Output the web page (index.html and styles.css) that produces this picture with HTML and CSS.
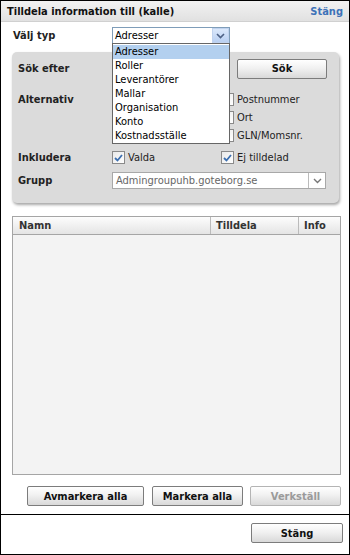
FILE: index.html
```html
<!DOCTYPE html>
<html>
<head>
<meta charset="utf-8">
<link rel="stylesheet" href="styles.css">
</head>
<body>
<div class="dialog">
  <div class="titlebar">
    <span class="title">Tilldela information till (kalle)</span>
    <a class="close-link">Stäng</a>
  </div>
  <div class="content">
    <div class="type-row">
      <span class="label">Välj typ</span>
      <div class="type-select">
        <div class="select blue">
          <span class="select-text">Adresser</span>
          <span class="arrow-btn">
            <svg width="9" height="6" viewBox="0 0 9 6"><path d="M1 1 L4.5 4.5 L8 1" fill="none" stroke="#4d6185" stroke-width="1.6"/></svg>
          </span>
        </div>
        <ul class="dropdown">
          <li class="sel">Adresser</li>
          <li>Roller</li>
          <li>Leverantörer</li>
          <li>Mallar</li>
          <li>Organisation</li>
          <li>Konto</li>
          <li>Kostnadsställe</li>
        </ul>
      </div>
    </div>

    <div class="panel">
      <div class="prow search-row">
        <span class="label">Sök efter</span>
        <div class="controls">
          <span class="text-input"></span>
          <button class="btn search-btn">Sök</button>
        </div>
      </div>
      <div class="prow alt-row">
        <span class="label">Alternativ</span>
        <div class="alt-grid">
          <span class="cb"><span class="box"></span></span>
          <label class="cb"><span class="box"></span>Postnummer</label>
          <span class="cb"><span class="box"></span></span>
          <label class="cb"><span class="box"></span>Ort</label>
          <span class="cb"><span class="box"></span></span>
          <label class="cb"><span class="box"></span>GLN/Momsnr.</label>
        </div>
      </div>
      <div class="prow inc-row">
        <span class="label">Inkludera</span>
        <div class="alt-grid">
          <label class="cb"><span class="box checked"><svg width="9" height="8" viewBox="0 0 9 8"><path d="M1 4 L3.5 6.5 L8 1" fill="none" stroke="#3c6fb0" stroke-width="1.8"/></svg></span>Valda</label>
          <label class="cb"><span class="box checked"><svg width="9" height="8" viewBox="0 0 9 8"><path d="M1 4 L3.5 6.5 L8 1" fill="none" stroke="#3c6fb0" stroke-width="1.8"/></svg></span>Ej tilldelad</label>
        </div>
      </div>
      <div class="prow group-row">
        <span class="label">Grupp</span>
        <div class="select gray">
          <span class="select-text">Admingroupuhb.goteborg.se</span>
          <span class="arrow-plain">
            <svg width="9" height="6" viewBox="0 0 9 6"><path d="M1 1 L4.5 4.5 L8 1" fill="none" stroke="#777" stroke-width="1.4"/></svg>
          </span>
        </div>
      </div>
    </div>

    <div class="table">
      <div class="thead">
        <span class="th c-name">Namn</span>
        <span class="th c-assign">Tilldela</span>
        <span class="th c-info">Info</span>
      </div>
      <div class="tbody"></div>
    </div>

    <div class="actions">
      <button class="btn w-unmark">Avmarkera alla</button>
      <button class="btn w-mark">Markera alla</button>
      <button class="btn w-apply disabled">Verkställ</button>
    </div>
  </div>
  <div class="footer">
    <button class="btn w-close">Stäng</button>
  </div>
</div>
</body>
</html>
```

FILE: styles.css
```css
* { box-sizing: border-box; }
html, body { margin: 0; padding: 0; background: #fff; }
body {
  font-family: "DejaVu Sans Condensed", "DejaVu Sans", sans-serif;
  font-size: 11px;
  color: #000;
}
.dialog {
  width: 350px;
  height: 555px;
  border: 1px solid #000;
  display: flex;
  flex-direction: column;
  background: #fff;
}
.titlebar {
  height: 21px;
  flex: none;
  display: flex;
  align-items: center;
  justify-content: space-between;
  padding: 0 6px 0 6px;
  background: linear-gradient(#f2f2f2, #e1e1e1);
  border-bottom: 1px solid #d0d0d0;
}
.title { font-weight: bold; font-size: 11px; color: #111; }
.close-link { font-weight: bold; color: #3d72b8; }

.content {
  flex: 1;
  padding: 5px 8px 0 10px;
  display: flex;
  flex-direction: column;
}
.label { font-weight: bold; color: #222; }

.type-row {
  display: flex;
  align-items: center;
  height: 17px;
  padding-left: 2px;
  position: relative;
  z-index: 5;
}
.type-row .label { width: 99px; }
.type-select { position: relative; width: 118px; }

.select {
  height: 17px;
  display: flex;
  align-items: center;
  background: #fff;
}
.select.blue { border: 1px solid #7f9db9; padding-left: 2px; }
.select-text { flex: 1; }
.arrow-btn {
  width: 17px;
  height: 15px;
  display: flex;
  align-items: center;
  justify-content: center;
  background: linear-gradient(#dbe8fb, #b9d0f2);
  border: 1px solid #c0d3ef;
}
.dropdown {
  position: absolute;
  left: 0;
  top: 16px;
  width: 118px;
  margin: 0;
  padding: 1px 0 0 0;
  list-style: none;
  background: #fff;
  border: 1px solid #666;
}
.dropdown li { height: 14px; line-height: 14px; padding-left: 2px; }
.dropdown li.sel { background: #b3d0ef; }

.panel {
  margin-top: 8px;
  width: 327px;
  margin-left: 1px;
  height: 151px;
  background: #dbdbdb;
  border-radius: 5px;
  box-shadow: 1px 2px 3px rgba(0,0,0,0.35);
  padding: 7px 6px 0 6px;
  display: flex;
  flex-direction: column;
}
.prow { display: flex; }
.prow .label { width: 94px; flex: none; }
.search-row { align-items: center; height: 19px; }
.controls { display: flex; align-items: center; gap: 8px; }
.text-input { display: block; width: 117px; height: 18px; border: 1px solid #999; background: #fff; }
.search-btn { width: 90px; height: 19px; }

.alt-row { margin-top: 15px; }
.alt-grid {
  display: grid;
  grid-template-columns: 109px 110px;
  grid-auto-rows: 13px;
  row-gap: 5px;
}
.cb { display: flex; align-items: center; gap: 3px; height: 13px; color: #222; }
.box {
  width: 13px;
  height: 13px;
  border: 1px solid #8a8a8a;
  background: linear-gradient(135deg, #e9e9e9, #fff);
  display: flex;
  align-items: center;
  justify-content: center;
  flex: none;
}
.inc-row { margin-top: 9px; align-items: center; }
.group-row { margin-top: 8px; align-items: center; }
.select.gray {
  width: 214px;
  border: 1px solid #a8a8a8;
  padding-left: 3px;
  color: #666;
}
.arrow-plain {
  width: 17px;
  height: 15px;
  border-left: 1px solid #bbb;
  display: flex;
  align-items: center;
  justify-content: center;
}

.table {
  margin-top: 13px;
  margin-left: 1px;
  width: 329px;
  height: 259px;
  border: 1px solid #a5a5a5;
  display: flex;
  flex-direction: column;
  flex: none;
}
.thead {
  height: 18px;
  display: flex;
  background: linear-gradient(#fdfdfd, #e4e4e4);
  border-bottom: 1px solid #a5a5a5;
}
.th { font-weight: bold; color: #333; display: flex; align-items: center; padding-left: 6px; }
.c-name { width: 198px; border-right: 1px solid #bbb; }
.c-assign { width: 88px; border-right: 1px solid #bbb; padding-left: 5px; }
.c-info { flex: 1; padding-left: 5px; }
.tbody { flex: 1; background: #f3f3f3; }

.btn {
  font-family: inherit;
  font-size: 11px;
  font-weight: bold;
  color: #111;
  height: 20px;
  padding: 0;
  border: 1px solid #7c7c7c;
  border-radius: 2px;
  background: linear-gradient(#ffffff, #f1f1f1 45%, #d9d9d9);
}
.btn.disabled { color: #9a9a9a; border-color: #b4b4b4; }
.actions {
  margin-top: 11px;
  display: flex;
  padding-left: 16px;
}
.w-unmark { width: 117px; margin-right: 8px; }
.w-mark { width: 91px; margin-right: 7px; }
.w-apply { width: 91px; }

.footer {
  flex: none;
  height: 40px;
  border-top: 1px solid #000;
  display: flex;
  justify-content: flex-end;
  align-items: flex-start;
  padding: 8px 6px 0 0;
}
.w-close { width: 92px; height: 20px; }
```
